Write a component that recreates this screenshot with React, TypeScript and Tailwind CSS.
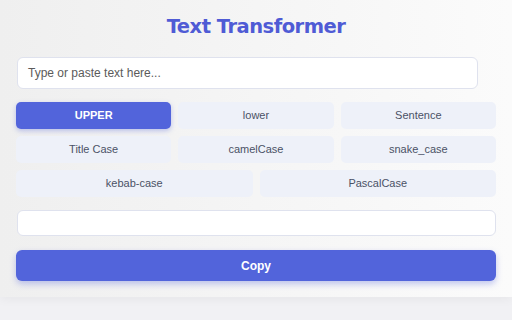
import React from "react";

export default function App() {
  const row1 = ["UPPER", "lower", "Sentence"];
  const row2 = ["Title Case", "camelCase", "snake_case"];
  const row3 = ["kebab-case", "PascalCase"];
  const btn =
    "h-[27px] rounded-[5px] bg-[#eef1f9] text-[11px] text-[#4b5166] flex items-center justify-center";
  return (
    <div
      className="w-[512px] h-[320px] bg-[#f1f1f4] overflow-hidden"
      style={{ fontFamily: '"Liberation Sans", Arial, sans-serif' }}
    >
      <div className="h-[297px] bg-gradient-to-r from-[#efefef] to-[#fbfbfb] shadow-[0_2px_10px_rgba(0,0,0,0.05)] px-4 pt-[13px]">
        <h1
          className="text-center text-[19.5px] font-bold text-[#4f5bd5] leading-[28px] tracking-[-0.5px]"
          style={{ fontFamily: '"DejaVu Sans", Verdana, sans-serif' }}
        >
          Text Transformer
        </h1>
        <div className="mt-[16px] ml-[1px] w-[461px] h-[32px] rounded-[6px] bg-white border border-[#dfe2ee] flex items-center px-[10px] text-[12px] text-[#5b5b5b]">
          Type or paste text here...
        </div>
        <div className="mt-[13px] flex flex-col gap-[7px]">
          <div className="grid grid-cols-3 gap-[7px]">
            {row1.map((t, i) => (
              <div
                key={t}
                className={
                  i === 0
                    ? "h-[27px] rounded-[5px] bg-[#5264db] text-[11px] font-bold text-white flex items-center justify-center shadow-[0_2px_5px_rgba(82,100,219,0.35)]"
                    : btn
                }
              >
                {t}
              </div>
            ))}
          </div>
          <div className="grid grid-cols-3 gap-[7px]">
            {row2.map((t) => (
              <div key={t} className={btn}>
                {t}
              </div>
            ))}
          </div>
          <div className="grid grid-cols-2 gap-[7px]">
            {row3.map((t) => (
              <div key={t} className={btn}>
                {t}
              </div>
            ))}
          </div>
        </div>
        <div className="mt-[13px] ml-[1px] h-[26px] rounded-[6px] bg-white border border-[#dfe2ee]" />
        <div className="mt-[14px] h-[31px] rounded-[6px] bg-[#5264db] text-white text-[12px] font-bold flex items-center justify-center shadow-[0_3px_6px_rgba(82,100,219,0.35)]">
          Copy
        </div>
      </div>
    </div>
  );
}
